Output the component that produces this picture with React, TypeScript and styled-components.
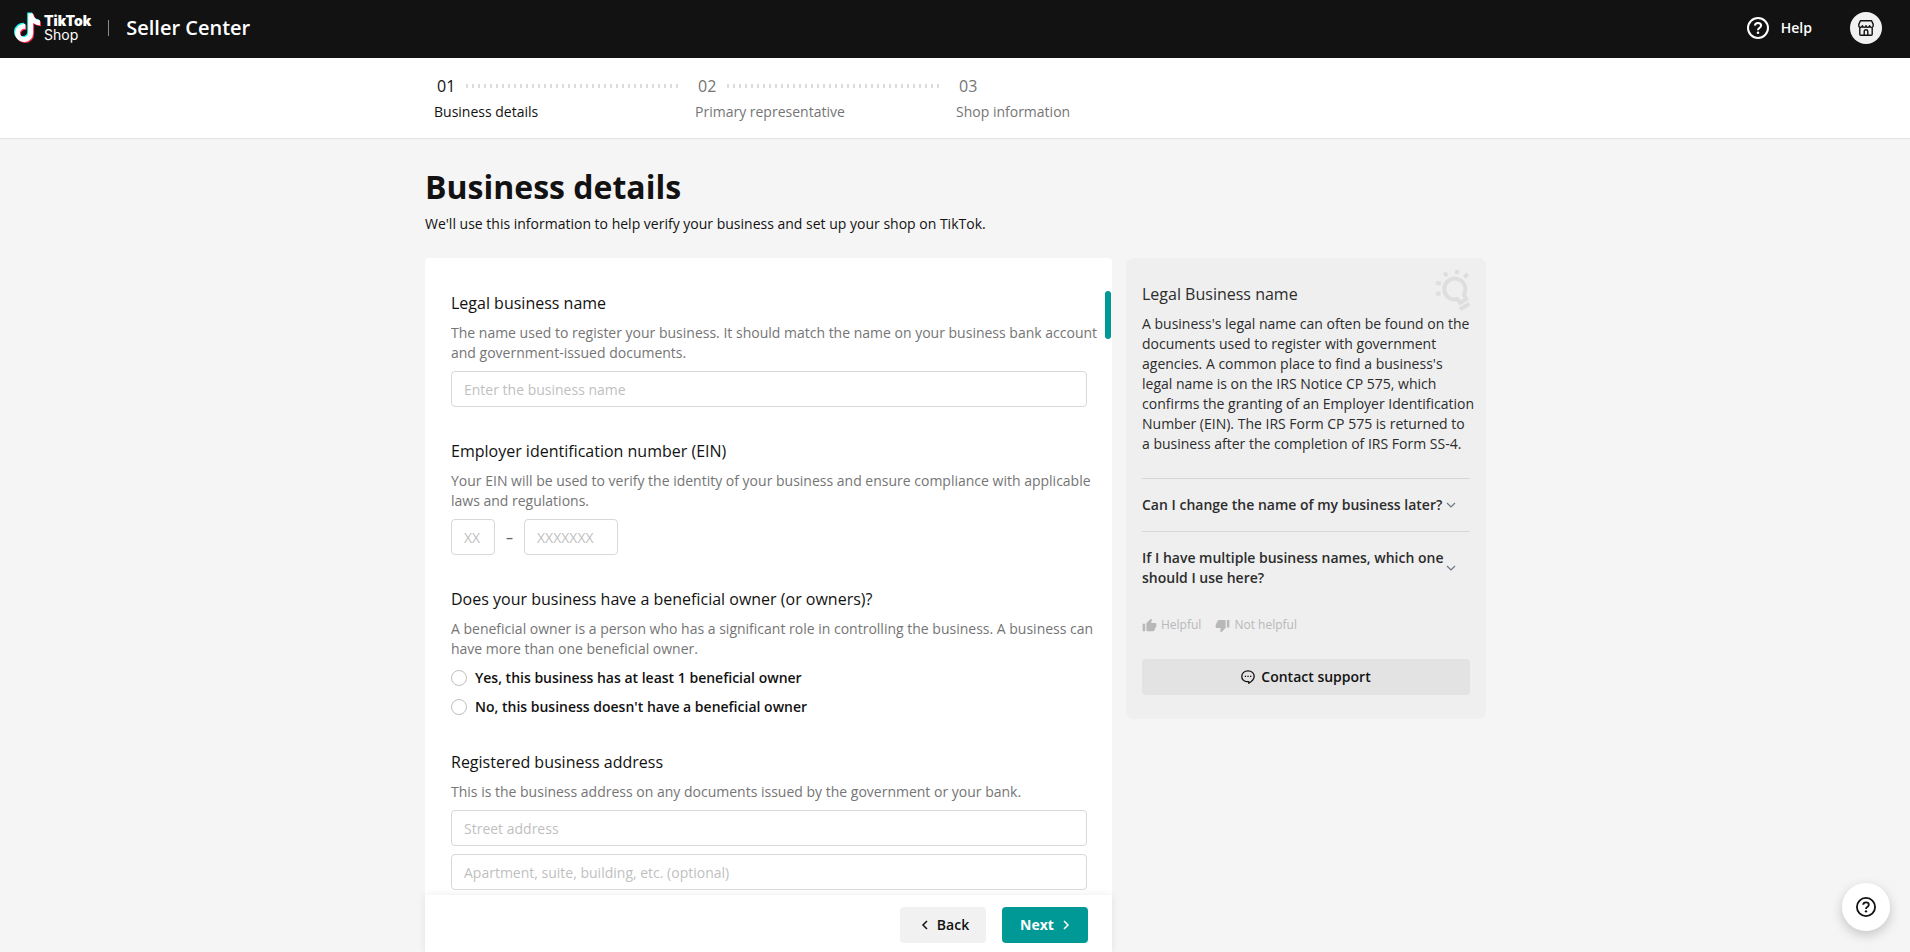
import React from "react";
import styled, { createGlobalStyle } from "styled-components";
import { MdThumbDown, MdThumbUp } from "react-icons/md";

const GlobalStyle = createGlobalStyle`
  *, *::before, *::after { box-sizing: border-box; }
  body {
    margin: 0;
    background: #f5f5f5;
    color: #121212;
    font-family: "Open Sans", "Liberation Sans", sans-serif;
    font-size: 14px;
    line-height: 20px;
  }
  h1, h2, p, ol, fieldset, legend { margin: 0; padding: 0; border: 0; }
  button, input { font: inherit; color: inherit; }
  button { cursor: pointer; border: 0; }
`;

const Page = styled.div`
  display: flex;
  flex-direction: column;
  height: 100vh;
  overflow: hidden;
`;

/* Top bar */

const Header = styled.header`
  display: flex;
  flex: none;
  align-items: center;
  height: 58px;
  padding: 0 28px 2px 14px;
  background: #121212;
  color: #fff;
`;

const Brand = styled.a`
  display: flex;
  align-items: center;
  gap: 3px;
  color: inherit;
  text-decoration: none;
  svg { display: block; }
`;

const Wordmark = styled.span`
  display: flex;
  flex-direction: column;
  font: 400 14px/14px Inter, sans-serif;
  strong { font-weight: 900; }
`;

const HeaderRule = styled.span`
  width: 1px;
  height: 16px;
  margin: 0 17px;
  background: #8a8a8a;
`;

const Product = styled.span`
  font-size: 20px;
  font-weight: 600;
  line-height: 24px;
`;

const HeaderActions = styled.div`
  display: flex;
  align-items: center;
  gap: 38px;
  margin-left: auto;
`;

const HelpLink = styled.a`
  display: flex;
  align-items: center;
  gap: 12px;
  color: inherit;
  font-weight: 600;
  text-decoration: none;
`;

const ShopButton = styled.button`
  display: grid;
  place-items: center;
  width: 32px;
  height: 32px;
  padding: 0;
  border-radius: 50%;
  background: #f1f1f1;
  color: #121212;
`;

/* Progress */

const StepBar = styled.nav`
  flex: none;
  border-bottom: 1px solid #e3e3e5;
  background: #fff;
`;

const StepList = styled.ol`
  display: grid;
  grid-template-columns: repeat(3, 261px);
  max-width: 1060px;
  margin: 0 auto;
  padding: 16px 9px;
  list-style: none;
`;

const StepItem = styled.li<{ $current?: boolean }>`
  color: ${(p) => (p.$current ? "#121212" : "#757575")};
  font-weight: 500;
`;

const StepTop = styled.div`
  display: flex;
  align-items: center;
  height: 24px;
  margin-bottom: 4px;
  padding: 0 17px 0 3px;
  font-size: 16px;
  font-weight: 400;
`;

const StepNumber = styled.span`
  width: 29px;
`;

const StepLine = styled.span`
  flex: 1;
  height: 4px;
  background: repeating-linear-gradient(90deg, #dcdcdc 0 2px, transparent 2px 6px);
`;

/* Main area */

const Main = styled.main`
  display: flex;
  flex: 1;
  flex-direction: column;
  width: 100%;
  max-width: 1062px;
  min-height: 0;
  margin: 0 auto;
  padding: 28px 0 0 1px;
`;

const PageTitle = styled.h1`
  font-size: 32px;
  font-weight: 700;
  line-height: 40px;
`;

const PageIntro = styled.p`
  margin: 7px 0 24px;
`;

const Columns = styled.div`
  display: flex;
  flex: 1;
  align-items: flex-start;
  gap: 14px;
  min-height: 0;
`;

const FormCard = styled.form`
  display: flex;
  flex: 1;
  flex-direction: column;
  align-self: stretch;
  min-width: 0;
  border-radius: 4px 4px 0 0;
  background: #fff;
`;

const FormBody = styled.div`
  display: flex;
  flex: 1;
  flex-direction: column;
  gap: 32px;
  min-height: 0;
  padding: 33px 25px 5px 26px;
  overflow: hidden auto;
  scrollbar-width: none;
`;

const Section = styled.fieldset`
  position: relative;
  display: flex;
  flex: none;
  flex-direction: column;
  gap: 8px;
  min-width: 0;
`;

const ActiveMarker = styled.span`
  position: absolute;
  top: 0;
  right: -24px;
  width: 6px;
  height: 48px;
  border-radius: 3px;
  background: #009995;
`;

const Heading = styled.h2`
  font-size: 16px;
  font-weight: 500;
  line-height: 24px;
`;

const Hint = styled.p`
  color: #757575;
  white-space: nowrap;
`;

const TextField = styled.input<{ $width?: number }>`
  width: ${(p) => (p.$width ? `${p.$width}px` : "100%")};
  height: 36px;
  padding: 0 12px;
  border: 1px solid #d8d8d8;
  border-radius: 4px;
  background: #fff;
  outline: 0;
  &::placeholder { color: #bfbfbf; opacity: 1; }
  &:focus { border-color: #009995; }
`;

const EinRow = styled.div`
  display: flex;
  align-items: center;
  gap: 11px;
  color: #666;
  font-weight: 600;
  input { font-weight: 400; }
`;

const RadioList = styled.div`
  display: flex;
  flex-direction: column;
  align-items: flex-start;
  gap: 7px;
`;

const RadioOption = styled.label`
  display: flex;
  align-items: center;
  gap: 8px;
  font-weight: 600;
  line-height: 22px;
  cursor: pointer;
`;

const Radio = styled.input`
  appearance: none;
  width: 16px;
  height: 16px;
  margin: 0;
  border: 1px solid #bfbfbf;
  border-radius: 50%;
  background: #fff;
  &:checked { border: 5px solid #009995; }
`;

const FormFooter = styled.div`
  display: flex;
  flex: none;
  justify-content: flex-end;
  gap: 16px;
  padding: 12px 24px 9px;
  background: #fff;
  box-shadow: 0 0 8px rgba(0, 0, 0, 0.08);
`;

const ActionButton = styled.button<{ $primary?: boolean }>`
  display: flex;
  align-items: center;
  justify-content: center;
  gap: 8px;
  width: 86px;
  height: 36px;
  padding: ${(p) => (p.$primary ? "0" : "0 0 0 4px")};
  border-radius: 4px;
  background: ${(p) => (p.$primary ? "#009995" : "#f1f1f1")};
  color: ${(p) => (p.$primary ? "#fff" : "#121212")};
  font-weight: ${(p) => (p.$primary ? 700 : 600)};
`;

/* Guidance panel */

const Aside = styled.aside`
  position: relative;
  flex: 0 0 360px;
  min-width: 0;
  padding: 24px 16px;
  border-radius: 8px;
  background: #efefef;
  color: #2c2c2c;
`;

const BulbArt = styled.span`
  position: absolute;
  top: 10px;
  right: 14px;
  svg { display: block; }
`;

const AsideText = styled.p`
  margin: 8px 0 24px;
  white-space: nowrap;
`;

const Question = styled.button`
  display: flex;
  align-items: center;
  gap: 2px;
  width: 100%;
  padding: 16px 14px 16px 0;
  border-top: 1px solid #d6d6d6;
  background: none;
  font-weight: 600;
  text-align: left;
  white-space: nowrap;
  svg { flex: none; }
  span { flex: 1; }
`;

const Feedback = styled.div`
  display: flex;
  gap: 14px;
  margin: 11px 0 24px;
`;

const FeedbackButton = styled.button`
  display: flex;
  align-items: center;
  gap: 4px;
  padding: 0;
  background: none;
  color: #b8b8b8;
  font-size: 12px;
  line-height: 20px;
`;

const SupportButton = styled.button`
  display: flex;
  align-items: center;
  justify-content: center;
  gap: 6px;
  width: 100%;
  height: 36px;
  border-radius: 4px;
  background: #e3e3e3;
  color: #121212;
  font-weight: 600;
`;

const FloatingHelp = styled.button`
  position: fixed;
  right: 20px;
  bottom: 21px;
  display: grid;
  place-items: center;
  width: 48px;
  height: 48px;
  padding: 0;
  border-radius: 50%;
  background: #fff;
  color: #121212;
  box-shadow: 0 4px 12px rgba(0, 0, 0, 0.2);
`;

/* Drawings */

const NOTE =
  "M448,209.91a210.06,210.06,0,0,1-122.77-39.25V349.38A162.55,162.55,0,1,1,185,188.31V278.2a74.62,74.62,0,1,0,52.23,71.18V0l88,0a121.18,121.18,0,0,0,1.86,22.17h0A122.18,122.18,0,0,0,381,102.39a121.43,121.43,0,0,0,67,20.14Z";

const NoteLogo = () => (
  <svg width="27" height="32" viewBox="0 0 484 574" aria-hidden="true">
    <path d={NOTE} fill="#25f4ee" transform="translate(0 8)" />
    <path d={NOTE} fill="#fe2c55" transform="translate(36 46)" />
    <path d={NOTE} fill="#fff" transform="translate(18 27)" />
  </svg>
);

const HelpIcon = ({ size }: { size: number }) => (
  <svg width={size} height={size} viewBox="0 0 22 22" fill="none" stroke="currentColor" strokeWidth="2" aria-hidden="true">
    <circle cx="11" cy="11" r="10" />
    <path d="M7.9 8.6C8 6.9 9.3 5.9 11 5.9c1.8 0 3.1 1 3.1 2.6 0 1.3-.8 1.9-1.7 2.5-.9.6-1.4 1.1-1.4 2.2" />
    <circle cx="11" cy="15.8" r="1.3" fill="currentColor" stroke="none" />
  </svg>
);

const StoreIcon = () => (
  <svg width="16" height="16" viewBox="0 0 16 16" fill="none" stroke="currentColor" strokeWidth="1.4" strokeLinejoin="round" aria-hidden="true">
    <path d="M2.4 .8h11.2l1.6 3.6v1.2a1.8 1.8 0 0 1-3.6 0 1.8 1.8 0 0 1-3.6 0 1.8 1.8 0 0 1-3.6 0 1.8 1.8 0 0 1-3.6 0V4.4z" />
    <path d="M1.8 7.2v7a1 1 0 0 0 1 1h10.4a1 1 0 0 0 1-1v-7M6.2 15v-3.5a1.8 1.8 0 0 1 3.6 0V15" />
  </svg>
);

const Bulb = () => (
  <svg width="38" height="44" viewBox="0 0 38 44" fill="none" stroke="#dedede" strokeWidth="4" aria-hidden="true">
    <path d="M26 35l-2.5-4-3 .5A10.5 10.5 0 1 1 30.5 25l-.5 2 2.5 4z" strokeLinejoin="round" />
    <path d="M26 41.2l9.5-5.5M22.6 6.2l.8-4.4M12.9 8.3L10.5 4.5M6.8 15.8L2 14.7M6.5 25.3L2 26M30.3 9.3l3.4-3.3" />
  </svg>
);

const Chevron = ({ dir, color = "currentColor" }: { dir: "left" | "right" | "down"; color?: string }) => {
  const down = dir === "down";
  const points = { left: "6,2 2,6 6,10", right: "2,2 6,6 2,10", down: "1,1 5,5 9,1" }[dir];
  return (
    <svg
      width={down ? 10 : 8}
      height={down ? 6 : 12}
      viewBox={down ? "0 0 10 6" : "0 0 8 12"}
      fill="none"
      stroke={color}
      strokeWidth={down ? 1.2 : 1.5}
      aria-hidden="true"
    >
      <polyline points={points} />
    </svg>
  );
};

const ChatIcon = () => (
  <svg width="14" height="14" viewBox="0 0 14 14" fill="none" stroke="currentColor" strokeWidth="1.3" strokeLinejoin="round" aria-hidden="true">
    <path d="M5.6 11.6C2.9 11.2.8 9.1.8 6.3.8 3.2 3.5.8 7 .8s6.2 2.4 6.2 5.5c0 3.3-2.7 5.4-5.4 7v-1.7z" />
    <path d="M3.8 6.4h1.3M6.4 6.4h1.3M9 6.4h1.3" />
  </svg>
);

const STEPS = ["Business details", "Primary representative", "Shop information"];

export default function App() {
  return (
    <Page>
      <GlobalStyle />
      <Header>
        <Brand href="#">
          <NoteLogo />
          <Wordmark>
            <strong>TikTok</strong>
            <span>Shop</span>
          </Wordmark>
        </Brand>
        <HeaderRule />
        <Product>Seller Center</Product>
        <HeaderActions>
          <HelpLink href="#">
            <HelpIcon size={22} />
            Help
          </HelpLink>
          <ShopButton type="button" aria-label="Shop account">
            <StoreIcon />
          </ShopButton>
        </HeaderActions>
      </Header>

      <StepBar aria-label="Progress">
        <StepList>
          {STEPS.map((label, i) => (
            <StepItem key={label} $current={i === 0} aria-current={i === 0 ? "step" : undefined}>
              <StepTop>
                <StepNumber>{`0${i + 1}`}</StepNumber>
                {i < STEPS.length - 1 && <StepLine />}
              </StepTop>
              {label}
            </StepItem>
          ))}
        </StepList>
      </StepBar>

      <Main>
        <PageTitle>Business details</PageTitle>
        <PageIntro>We'll use this information to help verify your business and set up your shop on TikTok.</PageIntro>
        <Columns>
          <FormCard onSubmit={(e) => e.preventDefault()}>
            <FormBody>
              <Section aria-labelledby="legal-name">
                <ActiveMarker />
                <Heading id="legal-name">Legal business name</Heading>
                <Hint>
                  The name used to register your business. It should match the name on your business bank account
                  <br />
                  and government-issued documents.
                </Hint>
                <TextField aria-labelledby="legal-name" placeholder="Enter the business name" />
              </Section>

              <Section aria-labelledby="ein">
                <Heading id="ein">Employer identification number (EIN)</Heading>
                <Hint>
                  Your EIN will be used to verify the identity of your business and ensure compliance with applicable
                  <br />
                  laws and regulations.
                </Hint>
                <EinRow>
                  <TextField $width={44} aria-label="EIN prefix" placeholder="XX" />
                  –
                  <TextField $width={94} aria-label="EIN number" placeholder="XXXXXXX" />
                </EinRow>
              </Section>

              <Section aria-labelledby="owner">
                <Heading id="owner">Does your business have a beneficial owner (or owners)?</Heading>
                <Hint>
                  A beneficial owner is a person who has a significant role in controlling the business. A business can
                  <br />
                  have more than one beneficial owner.
                </Hint>
                <RadioList>
                  <RadioOption>
                    <Radio type="radio" name="owner" />
                    Yes, this business has at least 1 beneficial owner
                  </RadioOption>
                  <RadioOption>
                    <Radio type="radio" name="owner" />
                    No, this business doesn't have a beneficial owner
                  </RadioOption>
                </RadioList>
              </Section>

              <Section aria-labelledby="address">
                <Heading id="address">Registered business address</Heading>
                <Hint>This is the business address on any documents issued by the government or your bank.</Hint>
                <TextField aria-label="Street address" placeholder="Street address" />
                <TextField aria-label="Apartment, suite, building" placeholder="Apartment, suite, building, etc. (optional)" />
              </Section>
            </FormBody>
            <FormFooter>
              <ActionButton type="button">
                <Chevron dir="left" />
                Back
              </ActionButton>
              <ActionButton type="submit" $primary>
                Next
                <Chevron dir="right" />
              </ActionButton>
            </FormFooter>
          </FormCard>

          <Aside>
            <BulbArt>
              <Bulb />
            </BulbArt>
            <Heading>Legal Business name</Heading>
            <AsideText>
              A business's legal name can often be found on the
              <br />
              documents used to register with government
              <br />
              agencies. A common place to find a business's
              <br />
              legal name is on the IRS Notice CP 575, which
              <br />
              confirms the granting of an Employer Identification
              <br />
              Number (EIN). The IRS Form CP 575 is returned to
              <br />a business after the completion of IRS Form SS-4.
            </AsideText>
            <Question type="button" aria-expanded="false">
              <span>Can I change the name of my business later?</span>
              <Chevron dir="down" color="#6b7785" />
            </Question>
            <Question type="button" aria-expanded="false">
              <span>
                If I have multiple business names, which one
                <br />
                should I use here?
              </span>
              <Chevron dir="down" color="#6b7785" />
            </Question>
            <Feedback>
              <FeedbackButton type="button">
                <MdThumbUp size={15} />
                Helpful
              </FeedbackButton>
              <FeedbackButton type="button">
                <MdThumbDown size={15} />
                Not helpful
              </FeedbackButton>
            </Feedback>
            <SupportButton type="button">
              <ChatIcon />
              Contact support
            </SupportButton>
          </Aside>
        </Columns>
      </Main>

      <FloatingHelp type="button" aria-label="Open help">
        <HelpIcon size={20} />
      </FloatingHelp>
    </Page>
  );
}
